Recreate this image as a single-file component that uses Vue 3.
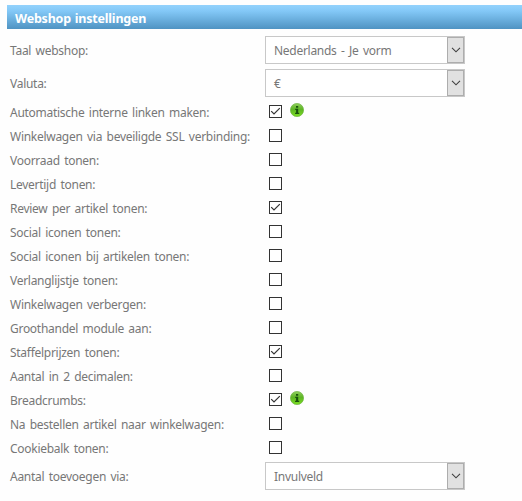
<script setup>
import { ref } from 'vue'

const rows = ref([
  { label: 'Taal webshop:', type: 'select', value: 'Nederlands - Je vorm' },
  { label: 'Valuta:', type: 'select', value: '€' },
  { label: 'Automatische interne linken maken:', checked: true, info: true },
  { label: 'Winkelwagen via beveiligde SSL verbinding:', checked: false },
  { label: 'Voorraad tonen:', checked: false },
  { label: 'Levertijd tonen:', checked: false },
  { label: 'Review per artikel tonen:', checked: true },
  { label: 'Social iconen tonen:', checked: false },
  { label: 'Social iconen bij artikelen tonen:', checked: false },
  { label: 'Verlanglijstje tonen:', checked: false },
  { label: 'Winkelwagen verbergen:', checked: false },
  { label: 'Groothandel module aan:', checked: false },
  { label: 'Staffelprijzen tonen:', checked: true },
  { label: 'Aantal in 2 decimalen:', checked: false },
  { label: 'Breadcrumbs:', checked: true, info: true },
  { label: 'Na bestellen artikel naar winkelwagen:', checked: false },
  { label: 'Cookiebalk tonen:', checked: false },
  { label: 'Aantal toevoegen via:', type: 'select', value: 'Invulveld' }
])

const toggle = (row) => {
  row.checked = !row.checked
}
</script>

<template>
  <div class="settings">
    <h1 class="settings-header">Webshop instellingen</h1>
    <div class="settings-body">
      <div v-for="row in rows" :key="row.label" class="row" :class="{ 'row-select': row.type === 'select' }">
        <span class="label">{{ row.label }}</span>
        <div v-if="row.type === 'select'" class="select">
          <span class="select-value">{{ row.value }}</span>
          <span class="select-button">
            <svg width="10" height="6" viewBox="0 0 10 6">
              <path d="M1 0.8 L5 4.8 L9 0.8" fill="none" stroke="#404040" stroke-width="1.1" />
            </svg>
          </span>
        </div>
        <template v-else>
          <span class="checkbox" role="checkbox" :aria-checked="row.checked" @click="toggle(row)">
            <svg v-if="row.checked" width="11" height="11" viewBox="0 0 11 11">
              <path d="M1.2 5.2 L4 8 L9.8 2.2" fill="none" stroke="#333" stroke-width="1.2" />
            </svg>
          </span>
          <svg v-if="row.info" class="info" width="14" height="14" viewBox="0 0 14 14">
            <defs>
              <linearGradient id="infoFill" x1="0" y1="0" x2="0" y2="1">
                <stop offset="0" stop-color="#8fce5c" />
                <stop offset="0.45" stop-color="#5db524" />
                <stop offset="1" stop-color="#7ade20" />
              </linearGradient>
            </defs>
            <circle cx="7" cy="7" r="6.6" fill="url(#infoFill)" stroke="#6fb544" stroke-width="0.7" />
            <path d="M6 3h2.2v1.8H6z M5.2 5.8h3v4h1v1.1H5.1V9.8h1V6.9h-0.9z" fill="#17500b" />
          </svg>
        </template>
      </div>
    </div>
  </div>
</template>

<style>
body {
  background: #fefefe;
}
</style>

<style scoped>
.settings {
  height: 501px;
  padding: 5px 0 0 7px;
  box-sizing: border-box;
  overflow: hidden;
  font-family: "Noto Sans", "Open Sans", sans-serif;
  font-size: 12px;
  letter-spacing: -0.28px;
  word-spacing: 1.6px;
  color: #777;
}

.settings-header {
  height: 24px;
  margin: 0 0 5px;
  padding-left: 8px;
  line-height: 28px;
  font-size: 12.5px;
  font-weight: 700;
  letter-spacing: -0.2px;
  word-spacing: 0.8px;
  color: #fff;
  background: linear-gradient(#93d2fc 0%, #83c8f7 25%, #4f93c2 100%);
}

.row {
  display: flex;
  align-items: center;
  height: 24px;
}

.row-select {
  height: 33px;
}

.label {
  width: 255px;
  padding-left: 3px;
  box-sizing: border-box;
  white-space: nowrap;
}

.select {
  display: flex;
  width: 200px;
  height: 28px;
  margin: 0 0 1px 3px;
  box-sizing: border-box;
  border: 1px solid #c8c8c8;
  background: #fff;
}

.select-value {
  flex: 1;
  padding-left: 8px;
  line-height: 28px;
}

.select-button {
  display: flex;
  align-items: center;
  justify-content: center;
  width: 17px;
  box-sizing: border-box;
  border: 1px solid #adadad;
  background: #e1e1e1;
}

.checkbox {
  width: 13px;
  height: 13px;
  margin: 0 0 1px 7px;
  box-sizing: border-box;
  border: 1px solid #333;
  background: #fff;
}

.checkbox svg {
  display: block;
}

.info {
  margin: 0 0 4px 8px;
}
</style>
